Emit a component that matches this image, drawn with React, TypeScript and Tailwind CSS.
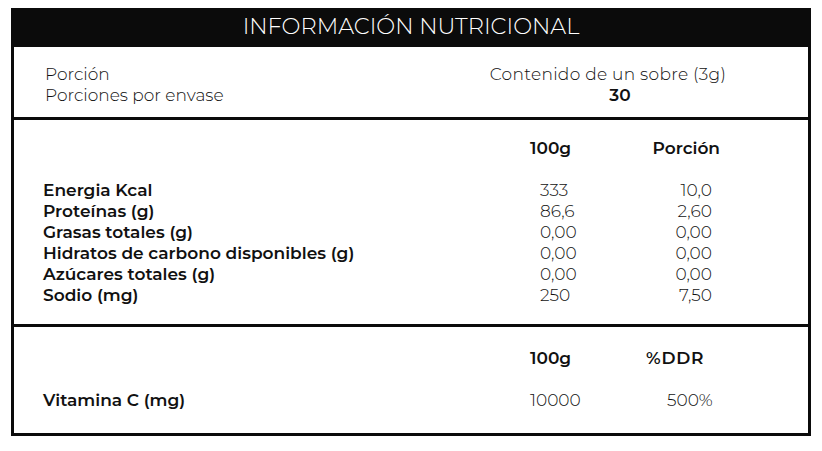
const FONT = "font-['Montserrat','Open_Sans','Liberation_Sans',sans-serif]";

type Row = { label: string; per100: string; portion: string };

const ROWS: Row[] = [
  { label: "Energia Kcal", per100: "333", portion: "10,0" },
  { label: "Proteínas (g)", per100: "86,6", portion: "2,60" },
  { label: "Grasas totales (g)", per100: "0,00", portion: "0,00" },
  { label: "Hidratos de carbono disponibles (g)", per100: "0,00", portion: "0,00" },
  { label: "Azúcares totales (g)", per100: "0,00", portion: "0,00" },
  { label: "Sodio (mg)", per100: "250", portion: "7,50" },
];

export default function App() {
  return (
    <div className={`min-h-[451px] w-[822px] bg-white pl-[11px] pt-[8px] text-[#111] ${FONT}`}>
      <div className="w-[800px] border-x-[3px] border-b-[3px] border-[#0b0b0b]">
        {/* header */}
        <div className="flex h-[39px] items-center justify-center bg-[#0b0b0b] pb-[2px] text-[22.5px] font-light text-white">
          INFORMACIÓN NUTRICIONAL
        </div>

        {/* serving */}
        <div className="flex h-[73px] border-b-[3px] border-[#0b0b0b] pl-[31px] pt-[17px] text-[17px] font-light leading-[21px]">
          <div className="w-[443px]">
            <p>Porción</p>
            <p>Porciones por envase</p>
          </div>
          <div className="w-[240px] text-center">
            <p className="tracking-[0.3px]">Contenido de un sobre (3g)</p>
            <p className="pl-[24px] font-semibold">30</p>
          </div>
        </div>

        {/* nutrients */}
        <div className="h-[207px] border-b-[3px] border-[#0b0b0b] pl-[29px] pt-[18px] text-[17px] leading-[21px]">
          <div className="grid grid-cols-[487px_110px_80px] font-semibold">
            <span />
            <span>100g</span>
            <span className="text-right">Porción</span>
          </div>
          <div className="mt-[21px]">
            {ROWS.map((row) => (
              <div key={row.label} className="grid grid-cols-[497px_100px_72px]">
                <span className="font-semibold">{row.label}</span>
                <span className="font-light">{row.per100}</span>
                <span className="text-right font-light">{row.portion}</span>
              </div>
            ))}
          </div>
        </div>

        {/* vitamins */}
        <div className="h-[106px] pl-[29px] pt-[21px] text-[17px] leading-[21px]">
          <div className="grid grid-cols-[487px_116px_80px] font-semibold">
            <span />
            <span>100g</span>
            <span className="tracking-[0.8px]">%DDR</span>
          </div>
          <div className="mt-[21px] grid grid-cols-[487px_137px_72px]">
            <span className="font-semibold">Vitamina C (mg)</span>
            <span className="font-light">10000</span>
            <span className="font-light">500%</span>
          </div>
        </div>
      </div>
    </div>
  );
}
